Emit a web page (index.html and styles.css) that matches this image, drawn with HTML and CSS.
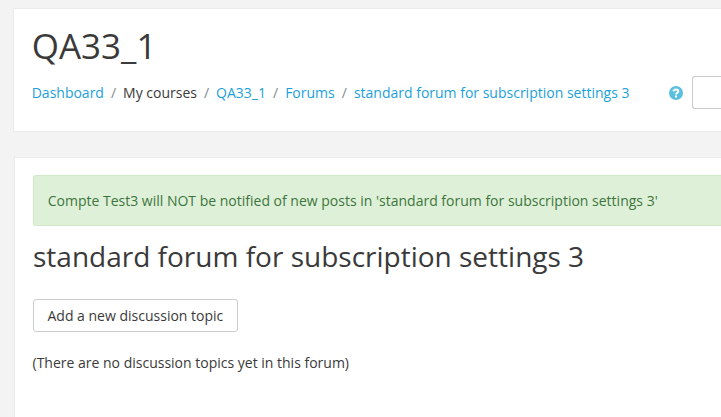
FILE: index.html
```html
<!DOCTYPE html>
<html lang="en">
<head>
    <meta charset="UTF-8">
    <meta name="viewport" content="width=device-width, initial-scale=1.0">
    <title>QA33_1: standard forum for subscription settings 3</title>
    <link rel="stylesheet" href="styles.css">
</head>
<body>
    <header class="card page-header">
        <h1>QA33_1</h1>
        <div class="navbar">
            <ol class="breadcrumb">
                <li><a href="#">Dashboard</a></li>
                <li>My courses</li>
                <li><a href="#">QA33_1</a></li>
                <li><a href="#">Forums</a></li>
                <li><a href="#">standard forum for subscription settings 3</a></li>
            </ol>
            <form class="search">
                <a href="#" class="help" title="Help">
                    <svg width="14" height="14" viewBox="0 0 14 14">
                        <circle cx="7" cy="7" r="7" fill="#5bc0de"/>
                        <path d="M4.5 5.4C4.8 4 5.7 3.4 6.9 3.4c1.4 0 2.4.8 2.4 1.9C9.3 6.9 7 6.7 7 8.5" fill="none" stroke="#fff" stroke-width="2"/>
                        <rect x="6" y="9.5" width="2" height="2" fill="#fff"/>
                    </svg>
                </a>
                <input type="text" class="search-input">
            </form>
        </div>
    </header>

    <main class="card content">
        <div class="alert">Compte Test3 will NOT be notified of new posts in 'standard forum for subscription settings 3'</div>
        <h2>standard forum for subscription settings 3</h2>
        <button class="btn">Add a new discussion topic</button>
        <p>(There are no discussion topics yet in this forum)</p>
    </main>
</body>
</html>
```
FILE: styles.css
```css
* {
    box-sizing: border-box;
}
body {
    display: flex;
    flex-direction: column;
    margin: 0;
    padding: 8px 0 0 13px;
    height: 100vh;
    background-color: #f3f3f3;
    color: #3a3a3a;
    font-family: "Open Sans", sans-serif;
    font-size: 14px;
    line-height: 21px;
}
a {
    color: #1b9fdb;
    text-decoration: none;
}
.card {
    background-color: #fff;
    border: 1px solid #ebebeb;
    border-right: none;
}
.page-header {
    height: 124px;
    padding: 18px 0 18px 17.7px;
}
h1 {
    margin: 0;
    font-size: 35px;
    font-weight: 400;
    line-height: 38px;
}
.navbar {
    display: flex;
    align-items: center;
    margin-top: 11px;
}
.breadcrumb {
    display: flex;
    flex: none;
    width: 637.3px;
    margin: 0;
    padding: 0;
    list-style: none;
    white-space: nowrap;
}
.breadcrumb li + li::before {
    content: "/";
    padding: 0 7px;
    color: #818a91;
}
.search {
    display: flex;
    flex: 1;
    align-items: center;
    gap: 9px;
    min-width: 0;
}
.help svg {
    display: block;
}
.search-input {
    flex: 1;
    min-width: 0;
    height: 33px;
    border: 1px solid #ccc;
    border-right: none;
    border-radius: 3px 0 0 3px;
}
.content {
    flex: 1;
    margin: 25px 0 0 1px;
    padding: 17px 0 0 18px;
    border-bottom: none;
}
.alert {
    height: 51px;
    padding: 14px 0 14px 13.7px;
    background-color: #dff0d8;
    border: 1px solid #d0e9c6;
    border-right: none;
    border-radius: 3px 0 0 3px;
    color: #3c763d;
}
h2 {
    margin: 11px 0 24px;
    font-size: 28px;
    font-weight: 400;
    line-height: 38px;
}
.btn {
    display: block;
    height: 33px;
    padding: 0 13.5px;
    border: 1px solid #ccc;
    border-radius: 3px;
    background-color: #fff;
    color: #3a3a3a;
    font-family: inherit;
    font-size: 14px;
}
p {
    margin: 20px 0 0 -0.5px;
}
```
